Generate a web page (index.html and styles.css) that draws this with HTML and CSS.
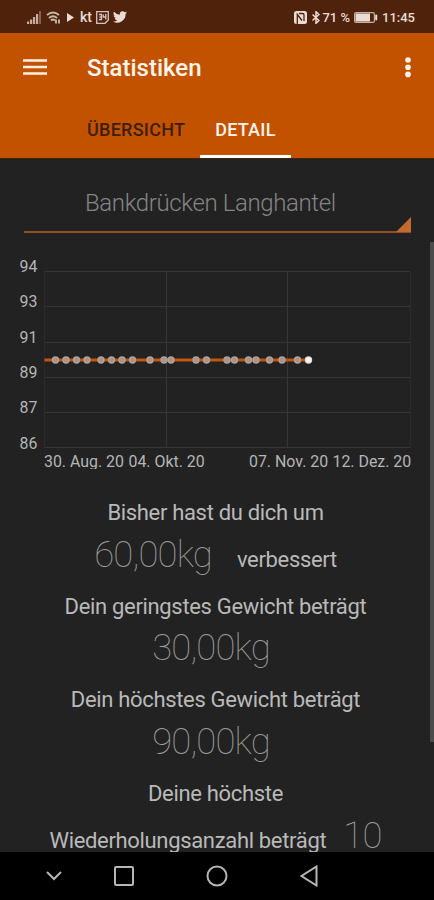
FILE: index.html
```html
<!DOCTYPE html>
<html lang="de">
<head>
    <meta charset="UTF-8">
    <meta name="viewport" content="width=device-width, initial-scale=1.0">
    <title>Statistiken</title>
    <link rel="stylesheet" href="styles.css">
</head>
<body>
    <div class="status-bar">
        <div class="status-left">
            <svg class="signal" width="14" height="13" viewBox="0 0 14 13">
                <path d="M0 10.500h2.200V13H0zM3 8.500h2.200V13H3zM6 6h2.200v7H6zM9 3h2.200v10H9z"/>
                <path d="M12 0h2v13h-2z" opacity=".45"/>
            </svg>
            <svg class="wifi" width="15" height="13" viewBox="0 0 15 13">
                <path d="M1 4q6-5 12 0M3 7q4-3.500 8 0M5 9.500q2-2 4 0"/>
                <path d="M10 8.500v4M13 12.500v-4"/>
            </svg>
            <svg class="play" width="7" height="9" viewBox="0 0 7 9"><path d="M0 0l7 4.500L0 9z"/></svg>
            <span class="kt">kt</span>
            <svg class="calendar" width="13" height="13" viewBox="0 0 13 13">
                <path d="M.7 .7h11.600v8.300l-3.300 3.300H.7z"/>
                <path d="M3 3.500h2.500v5H3M3.500 6h2M7.300 3.500v2.500h2.500M9.800 3v5.500"/>
            </svg>
            <svg class="bird" width="14" height="12" viewBox="0 0 24 20">
                <path d="M24 2.400a10 10 0 0 1-2.800.8A5 5 0 0 0 23.300.5a10 10 0 0 1-3.100 1.200 4.900 4.900 0 0 0-8.400 4.500A14 14 0 0 1 1.700 1a4.900 4.900 0 0 0 1.500 6.600A4.900 4.900 0 0 1 1 7a4.900 4.900 0 0 0 3.900 4.900 5 5 0 0 1-2.200.1 4.900 4.900 0 0 0 4.600 3.400A9.900 9.900 0 0 1 0 17.500 14 14 0 0 0 21.500 5 10 10 0 0 0 24 2.400z"/>
            </svg>
        </div>
        <div class="status-right">
            <svg class="nfc" width="13" height="13" viewBox="0 0 13 13">
                <rect width="13" height="13" rx="2.500"/>
                <path d="M3.300 13V3.500L8 9.500M5 2.500h3.500q1.500 0 1.500 1.500v6"/>
            </svg>
            <svg class="bluetooth" width="8" height="13" viewBox="0 0 8 13">
                <path d="M.5 3.500l6.500 6L4 12.300V.7L7 3.500l-6.500 6"/>
            </svg>
            <span class="percent">71 %</span>
            <svg class="battery" width="24" height="11" viewBox="0 0 24 11">
                <rect class="frame" x=".6" y=".6" width="19.800" height="9.800" rx="1.500"/>
                <rect x="1.500" y="1.500" width="14.500" height="8"/>
                <rect x="21.200" y="2.500" width="2" height="6" rx="1"/>
            </svg>
            <span class="clock">11:45</span>
        </div>
    </div>

    <header>
        <div class="toolbar">
            <svg class="menu" width="24" height="16" viewBox="0 0 24 16">
                <path d="M0 1.500h24M0 8h24M0 14.500h24"/>
            </svg>
            <h1>Statistiken</h1>
            <svg class="more" width="6" height="22" viewBox="0 0 6 22">
                <circle cx="3" cy="3" r="2.800"/>
                <circle cx="3" cy="10.200" r="2.800"/>
                <circle cx="3" cy="17.400" r="2.800"/>
            </svg>
        </div>
        <nav class="tabs">
            <span class="tab">ÜBERSICHT</span>
            <span class="tab active">DETAIL</span>
        </nav>
    </header>

    <main>
        <div class="spinner">Bankdrücken Langhantel</div>

        <svg class="chart" width="434" height="215" viewBox="0 254 434 215">
            <g class="grid">
                <path d="M44 271.500H410M44 306.500H410M44 342.500H410M44 377.500H410M44 412.500H410M44 447.500H410"/>
                <path d="M166.500 272V448M287.500 272V448"/>
                <path class="edge" d="M44.500 272V448M410.500 272V448"/>
            </g>
            <g class="axis">
                <text x="19.500" y="272">94</text>
                <text x="19.500" y="307.300">93</text>
                <text x="19.500" y="342.600">91</text>
                <text x="19.500" y="378">89</text>
                <text x="19.500" y="413.300">87</text>
                <text x="19.500" y="448.600">86</text>
                <text x="44" y="467.300">30. Aug. 20</text>
                <text x="128.500" y="467.300">04. Okt. 20</text>
                <text x="249" y="467.300">07. Nov. 20</text>
                <text x="332.500" y="467.300">12. Dez. 20</text>
            </g>
            <path class="line" d="M44.500 360H308.500"/>
            <g class="points"></g>
        </svg>

        <div class="stats">
            <p>Bisher hast du dich um</p>
            <p><span class="value">60,00kg</span><span class="after">verbessert</span></p>
            <p>Dein geringstes Gewicht beträgt</p>
            <p class="single"><span class="value">30,00kg</span></p>
            <p>Dein höchstes Gewicht beträgt</p>
            <p class="single"><span class="value">90,00kg</span></p>
            <p>Deine höchste</p>
            <p>Wiederholungsanzahl beträgt<span class="value count">10</span></p>
        </div>
        <div class="scrollbar"></div>
    </main>

    <footer>
        <svg width="16" height="10" viewBox="0 0 16 10"><path d="M1 1l7 7 7-7"/></svg>
        <svg width="20" height="20" viewBox="0 0 20 20"><rect x="1" y="1" width="18" height="18" rx="1"/></svg>
        <svg width="22" height="22" viewBox="0 0 22 22"><circle cx="11" cy="11" r="9.500"/></svg>
        <svg width="18" height="22" viewBox="0 0 18 22"><path d="M16.500 1.500v19L1.500 11z"/></svg>
    </footer>

    <script>
        const points = [55.5, 66, 76.5, 87, 101, 111.5, 122, 132.5, 150, 164, 171, 196, 206.5,
                        227, 234.5, 248.5, 256, 269.5, 282, 297.5, 308.5];
        const group = document.querySelector('.points');

        points.forEach((x, i) => {
            const dot = document.createElementNS('http://www.w3.org/2000/svg', 'circle');
            dot.setAttribute('cx', x);
            dot.setAttribute('cy', 360);
            dot.setAttribute('r', 3);
            if (i === points.length - 1) dot.classList.add('last');
            group.appendChild(dot);
        });
    </script>
</body>
</html>
```

FILE: styles.css
```css
* {
    margin: 0;
    padding: 0;
    box-sizing: border-box;
}

body {
    width: 434px;
    height: 900px;
    display: flex;
    flex-direction: column;
    overflow: hidden;
    background: #222;
    color: #b9b9b9;
    font-family: Roboto, sans-serif;
}

svg {
    display: block;
    flex: none;
}

.status-bar {
    height: 33px;
    flex: none;
    display: flex;
    justify-content: space-between;
    align-items: center;
    padding: 1px 19px 0 27px;
    background: #4f230b;
    color: #e9dcd4;
    fill: #e9dcd4;
    font-size: 13px;
    font-weight: 500;
}

.status-left,
.status-right {
    display: flex;
    align-items: center;
}

.signal {
    fill: #c3afa4;
}

.wifi {
    margin-left: 5px;
    fill: none;
    stroke: #c9b8ae;
    stroke-width: 1.8;
}

.play {
    margin-left: 6px;
}

.kt {
    margin: 0 4px 0 6px;
    font-size: 14px;
}

.calendar {
    fill: none;
    stroke: #d3c4bb;
    stroke-width: 1.3;
}

.bird {
    margin-left: 4px;
}

.nfc path {
    fill: none;
    stroke: #4f230b;
    stroke-width: 1.3;
}

.bluetooth {
    margin: 0 2px 0 5px;
    fill: none;
    stroke: #e9dcd4;
    stroke-width: 1.5;
}

.battery {
    margin: 0 4px;
}

.battery .frame {
    fill: none;
    stroke: #c3afa4;
    stroke-width: 1.2;
}

header {
    height: 126px;
    flex: none;
    background: #c35200;
    border-bottom: 1px solid #40210c;
}

.toolbar {
    height: 69px;
    display: flex;
    align-items: center;
    padding: 0 23px;
}

.menu {
    margin-top: -2px;
    stroke: #fff0e4;
    stroke-width: 2.6;
}

h1 {
    margin-left: 40px;
    color: #fff5ec;
    font-size: 24px;
    font-weight: 500;
}

.more {
    margin-left: auto;
    fill: #fff5ec;
}

.tabs {
    display: flex;
    height: 56px;
    padding-left: 72px;
}

.tab {
    padding: 0 15px;
    color: #3d1e08;
    font-size: 18px;
    font-weight: 500;
    line-height: 56px;
    letter-spacing: 0.25px;
}

.tab.active {
    border-bottom: 3px solid #fff;
    color: #fff5ec;
}

main {
    position: relative;
    flex: 1;
    overflow: hidden;
}

.spinner {
    position: relative;
    width: 387px;
    height: 74px;
    margin-left: 24px;
    padding: 30px 0 0 61px;
    border-bottom: 2px solid #914d29;
    color: #858585;
    font-size: 24px;
    font-weight: 300;
    line-height: 28px;
    letter-spacing: -0.38px;
}

.spinner::after {
    content: "";
    position: absolute;
    right: 0;
    bottom: -1px;
    border-left: 15px solid transparent;
    border-bottom: 15px solid #c4692f;
}

.chart {
    margin-top: 21px;
}

.grid {
    fill: none;
    stroke: #363636;
}

.edge {
    stroke: #2b2b2b;
}

.axis {
    fill: #b5b5b5;
    font-size: 15.9px;
}

.line {
    stroke: #c0560f;
    stroke-width: 3;
}

.points circle {
    fill: #b98f78;
    stroke: #a8a4a1;
    stroke-width: 1.4;
}

.points .last {
    fill: #fff;
    stroke: #ddd;
}

.stats {
    padding: 21px 3px 0 0;
    text-align: center;
    font-size: 22px;
    letter-spacing: -0.33px;
}

.stats p {
    height: 46.8px;
    line-height: 46.8px;
    white-space: nowrap;
}

.stats .single {
    padding-right: 9px;
}

.value {
    color: #9c9c9c;
    font-size: 36.5px;
    font-weight: 100;
    line-height: 0;
    letter-spacing: -0.85px;
}

.after {
    margin-left: 25px;
}

.count {
    margin-left: 17px;
}

.scrollbar {
    position: absolute;
    top: 83px;
    right: 0;
    width: 4px;
    height: 500px;
    background: #4b4b4b;
}

footer {
    height: 48px;
    flex: none;
    display: flex;
    align-items: center;
    padding-left: 46px;
    background: #000;
    fill: none;
    stroke: #b5b5b5;
    stroke-width: 2;
}

footer svg {
    margin-right: 52px;
}

footer svg:nth-child(2),
footer svg:nth-child(3) {
    margin-right: 72px;
}
```
